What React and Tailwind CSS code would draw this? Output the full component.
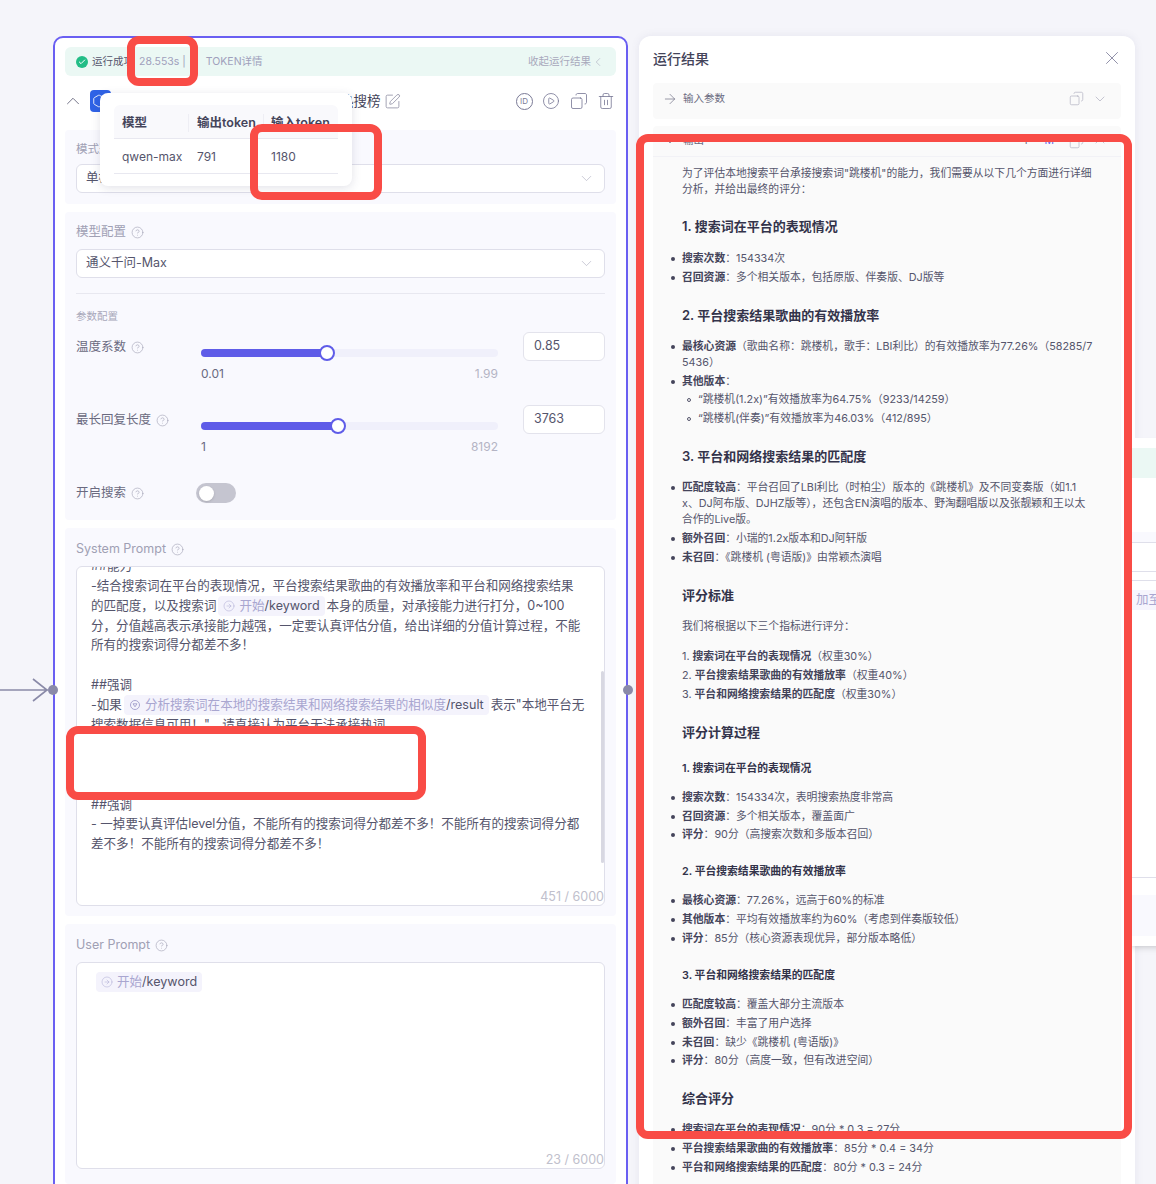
import { ArrowRight, Check, ChevronDown, ChevronLeft, ChevronUp, CircleArrowRight, CircleHelp, CirclePlay, Copy, Hexagon, SquarePen, Trash2, X } from 'lucide-react';

const FONT = { fontFamily: 'Inter, "Noto Sans CJK SC", sans-serif' };

function Help({ size = 13 }) {
    return <CircleHelp size={size} strokeWidth={1.2} className="text-[#a5a5b8] shrink-0" />;
}

function Select({ children }) {
    return (
        <div className="h-[29px] rounded-md border border-[#dfdfea] bg-white flex items-center justify-between pl-[9px] pr-[9px] text-[12.5px] text-[#55556c]">
            <span>{children}</span>
            <ChevronDown size={17} strokeWidth={1} className="text-[#b5b5c6]" />
        </div>
    );
}

function Slider({ label, min, max, value, percent }) {
    return (
        <div className="flex items-start">
            <div className="w-[125px] flex items-center gap-[5px] h-[28px] text-[12.5px] text-[#6a6a80]">
                {label} <Help />
            </div>
            <div className="w-[297px] pt-[16px]">
                <div className="relative h-[8px] rounded-full bg-[#f0f0fb]">
                    <div className="h-full rounded-full bg-[#5f5ce8]" style={{ width: `${percent}%` }} />
                    <div className="absolute top-[-4px] w-[16px] h-[16px] rounded-full bg-white border-2 border-[#5f5ce8] -ml-[8px]" style={{ left: `${percent}%` }} />
                </div>
                <div className="flex justify-between mt-[9px] text-[12px] leading-[16px]">
                    <span className="text-[#6a6a80]">{min}</span>
                    <span className="text-[#b4b4c4]">{max}</span>
                </div>
            </div>
            <div className="ml-auto -mt-[1px] w-[82px] h-[29px] rounded-md border border-[#e3e3ec] bg-white flex items-center pl-[10px] text-[12.5px] text-[#55556c]">
                {value}
            </div>
        </div>
    );
}

function Chip({ children, name, icon }) {
    return (
        <span className="inline-flex items-center h-[20px] px-[5px] mx-[2px] rounded bg-[#f4f3fc] align-top">
            {icon === 'down' ? (
                <svg width="12" height="12" viewBox="0 0 12 12" fill="none" stroke="#a9a6d0" className="mr-[4px]">
                    <circle cx="6" cy="6" r="4.5" />
                    <path d="M4 4.8h4L6 7.8z" />
                </svg>
            ) : (
                <CircleArrowRight size={12} strokeWidth={1} className="text-[#a9a6d0] mr-[4px]" />
            )}
            <span className="text-[#a9a6d0]">{children}</span>
            <span className="text-[#55556c]">{name}</span>
        </span>
    );
}

function H3({ children, first }) {
    return <h3 className={`text-[13px] leading-[20px] font-semibold text-[#33334a] ${first ? 'mt-[18px] mb-[15px]' : 'mt-[19px] mb-[14px]'}`}>{children}</h3>;
}

function H4({ children, first }) {
    return <h4 className={`text-[10.8px] leading-[16px] font-semibold text-[#33334a] mb-[13px] ${first ? 'mt-[19px]' : 'mt-[21px]'}`}>{children}</h4>;
}

function Ul({ items }) {
    return (
        <ul className="flex flex-col gap-[2.8px]">
            {items.map((item, i) => (
                <li key={i} className="relative">
                    <span className="absolute left-[-11px] top-[6px] w-[4px] h-[4px] rounded-full bg-[#44445a]" />
                    <b className="font-semibold text-[#44445a]">{item[0]}</b>{item[1]}
                    {item[2] && (
                        <div className="flex flex-col gap-[2.8px] mt-[2.8px] ml-[16px]">
                            {item[2].map(sub => (
                                <div key={sub} className="relative">
                                    <span className="absolute left-[-11px] top-[6px] w-[4px] h-[4px] rounded-full border border-[#55556c]" />
                                    {sub}
                                </div>
                            ))}
                        </div>
                    )}
                </li>
            ))}
        </ul>
    );
}

function RedBox({ className }) {
    return <div className={`absolute border-[8px] border-[#f94c46] rounded-[12px] ${className}`} />;
}

export default function App() {
    return (
        <div className="relative h-[1184px] overflow-hidden bg-[#f5f5fa]" style={FONT}>
            {/* neighbouring node behind the result panel */}
            <div className="absolute left-[1130px] top-[438px] w-[60px] h-[508px] bg-white shadow-md">
                <div className="h-[30px] mt-[10px] bg-[#ebf8f4]" />
                <div className="h-[11px] mt-[54px] bg-[#f9f9fe] border-b border-[#dfdfea]" />
                <div className="h-[10px] mt-[28px] border-y border-[#dfdfea]" />
                <div className="h-[20px] mt-[9px] pl-[6px] bg-[#f6f5fd] text-[12.5px] leading-[20px] text-[#a9a6d0]">加至</div>
                <div className="h-[18px] mt-[267px] border-t border-[#dfdfea]" />
                <div className="h-[41px] bg-[#f9f9fe]" />
            </div>

            {/* incoming edge */}
            <svg className="absolute left-0 top-[678px]" width="50" height="24" viewBox="0 0 50 24" fill="none" stroke="#8a8aa8" strokeWidth="1.6">
                <path d="M0 12h48M33 1l14 11-14 11" />
            </svg>

            <div className="flex items-start pl-[53px] pt-[36px] gap-[11px]">
                {/* node card */}
                <div className="relative w-[575px] h-[1300px] shrink-0 rounded-[10px] border-2 border-[#6a5ff2] bg-white px-[10px] pt-[9px]">
                    <div className="absolute left-[-7px] top-[647px] w-[10px] h-[10px] rounded-full bg-[#8a8aa8]" />
                    <div className="absolute right-[-7px] top-[647px] w-[10px] h-[10px] rounded-full bg-[#8a8aa8]" />

                    <div className="h-[29px] rounded-md bg-[#ebf8f4] flex items-center pl-[11px] pr-[11px] text-[10.5px]">
                        <span className="w-[12px] h-[12px] rounded-full bg-[#22bd86] flex items-center justify-center mr-[4px]">
                            <Check size={8} strokeWidth={3} className="text-white" />
                        </span>
                        <span className="text-[#55556c]">运行成功</span>
                        <span className="ml-[5px] text-[#a0a0bc]">28.553s |</span>
                        <span className="ml-[20px] text-[#a0a0bc]">TOKEN详情</span>
                        <span className="ml-auto flex items-center text-[#a8a8bc]">收起运行结果 <ChevronLeft size={14} strokeWidth={1} /></span>
                    </div>

                    <div className="flex items-center h-[54px] pb-[4px]">
                        <ChevronUp size={22} strokeWidth={1} className="text-[#6a6a80] -ml-[3px] mr-[6px]" />
                        <div className="w-[21px] h-[22px] rounded bg-[#2f62e6] flex items-center pl-[2px]">
                            <Hexagon size={14} strokeWidth={1.5} className="text-white" />
                        </div>
                        <span className="ml-auto mr-[3px] text-[13.5px] text-[#44445a]">分析搜索词在本地的搜索结果和网络热搜榜</span>
                        <SquarePen size={17} strokeWidth={1.1} className="text-[#8a8aa0]" />
                        <div className="ml-[115px] flex items-center gap-[9.5px] pr-[1px] text-[#7a7a96]">
                            <span className="w-[17px] h-[17px] rounded-full border border-[#7a7a96] flex items-center justify-center text-[8px] leading-none">ID</span>
                            <CirclePlay size={18} strokeWidth={1.1} />
                            <Copy size={18} strokeWidth={1.1} className="-scale-x-100" />
                            <Trash2 size={18} strokeWidth={1.1} />
                        </div>
                    </div>

                    <section className="h-[74px] rounded bg-[#f9f9fe] px-[11px] pt-[11px]">
                        <div className="text-[11.5px] leading-[16px] text-[#a0a0b4] mb-[7px]">模式选择</div>
                        <Select>单模型</Select>
                    </section>

                    <section className="h-[308px] mt-[8px] rounded bg-[#f9f9fe] px-[11px] pt-[11px]">
                        <div className="flex items-center gap-[5px] text-[12.5px] leading-[18px] text-[#a0a0b4] mb-[8px]">模型配置 <Help /></div>
                        <Select>通义千问-Max</Select>
                        <div className="border-t border-[#e8e8f0] mt-[15px] mb-[16px]" />
                        <div className="text-[10.5px] leading-[14px] text-[#a8a8ba] mb-[9px]">参数配置</div>
                        <Slider label="温度系数" min="0.01" max="1.99" value="0.85" percent={42.5} />
                        <div className="h-[24px]" />
                        <Slider label="最长回复长度" min="1" max="8192" value="3763" percent={46} />
                        <div className="flex items-center h-[20px] mt-[28px] text-[12.5px] text-[#6a6a80]">
                            <div className="w-[120px] flex items-center gap-[5px]">开启搜索 <Help /></div>
                            <div className="w-[40px] h-[20px] rounded-full bg-[#c5c5d0] p-[3px]">
                                <div className="w-[15px] h-[15px] rounded-full bg-white shadow" />
                            </div>
                        </div>
                    </section>

                    <section className="h-[388px] mt-[8px] rounded bg-[#f9f9fe] px-[11px] pt-[12px]">
                        <div className="flex items-center gap-[5px] text-[12.5px] leading-[18px] text-[#a0a0b4] mb-[8px]">System Prompt <Help /></div>
                        <div className="relative h-[340px] rounded-md border border-[#dfdfea] bg-white overflow-hidden pl-[14px] pr-[12px] text-[12.55px] leading-[19.75px] text-[#55556c]">
                            <div className="-mt-[11px]">
                                <div>##能力</div>
                                <div>-结合搜索词在平台的表现情况，平台搜索结果歌曲的有效播放率和平台和网络搜索结果</div>
                                <div>的匹配度，以及搜索词<Chip name="/keyword">开始</Chip>本身的质量，对承接能力进行打分，0~100</div>
                                <div>分，分值越高表示承接能力越强，一定要认真评估分值，给出详细的分值计算过程，不能</div>
                                <div>所有的搜索词得分都差不多！</div>
                                <div className="h-[20px]" />
                                <div>##强调</div>
                                <div>-如果<Chip name="/result" icon="down">分析搜索词在本地的搜索结果和网络搜索结果的相似度</Chip>表示"本地平台无</div>
                                <div>搜索数据信息可用！"，请直接认为平台无法承接热词</div>
                                <div className="h-[60px]" />
                                <div>##强调</div>
                                <div>- 一掉要认真评估level分值，不能所有的搜索词得分都差不多！不能所有的搜索词得分都</div>
                                <div>差不多！不能所有的搜索词得分都差不多！</div>
                            </div>
                            <div className="absolute right-0 top-[104px] w-[3px] h-[192px] rounded bg-[#d8d8e2]" />
                            <div className="absolute right-0 bottom-0 text-[12.5px] leading-[16px] text-[#c0c0cc]">451 / 6000</div>
                        </div>
                    </section>

                    <section className="h-[260px] mt-[8px] rounded bg-[#f9f9fe] px-[11px] pt-[12px]">
                        <div className="flex items-center gap-[5px] text-[12.5px] leading-[18px] text-[#a0a0b4] mb-[8px]">User Prompt <Help /></div>
                        <div className="relative h-[207px] rounded-md border border-[#dfdfea] bg-white px-[17px] pt-[9px] text-[12.55px] leading-[20px]">
                            <Chip name="/keyword">开始</Chip>
                            <div className="absolute right-0 bottom-0 text-[12.5px] leading-[16px] text-[#c0c0cc]">23 / 6000</div>
                        </div>
                    </section>
                </div>

                {/* result panel */}
                <div className="w-[496px] h-[1300px] shrink-0 rounded-[12px] bg-white shadow-[0_0_8px_rgba(90,90,140,0.1)] px-[14px]">
                    <div className="h-[47px] flex items-center justify-between pb-[3px]">
                        <span className="text-[14px] font-medium text-[#44445a]">运行结果</span>
                        <X size={22} strokeWidth={0.9} className="text-[#7a7a96] -mr-[2px]" />
                    </div>
                    <div className="h-[36px] rounded bg-[#fafafa] flex items-center pl-[9px] pr-[13px] pb-[5px] text-[10.5px] text-[#6a6a80]">
                        <ArrowRight size={16} strokeWidth={1} className="mr-[5px]" />
                        输入参数
                        <Copy size={15} strokeWidth={0.9} className="ml-auto mr-[8px] text-[#a0a0b4] -scale-x-100" />
                        <ChevronDown size={16} strokeWidth={0.9} className="text-[#a0a0b4]" />
                    </div>
                    <div className="mt-[7px] rounded bg-[#fafafa] h-[1200px]">
                        <div className="h-[31px] flex items-center pl-[9px] pr-[13px] text-[10.5px] text-[#6a6a80] border-b border-[#f2f2f6]">
                            <ChevronDown size={16} strokeWidth={1} className="mr-[5px]" />
                            输出
                            <span className="ml-auto mr-[15px] text-[#6a6a80]">T</span>
                            <span className="mr-[15px] text-[#5f5ce8]">M</span>
                            <Copy size={15} strokeWidth={0.9} className="mr-[8px] text-[#a0a0b4] -scale-x-100" />
                            <ChevronUp size={16} strokeWidth={0.9} className="text-[#a0a0b4]" />
                        </div>
                        <div className="pl-[29px] pr-[28px] pt-[9px] text-[10.8px] leading-[16px] text-[#55556c] break-all">
                            <p>为了评估本地搜索平台承接搜索词"跳楼机"的能力，我们需要从以下几个方面进行详细分析，并给出最终的评分：</p>
                            <H3 first>1. 搜索词在平台的表现情况</H3>
                            <Ul items={[['搜索次数', '：154334次'], ['召回资源', '：多个相关版本，包括原版、伴奏版、DJ版等']]} />
                            <H3>2. 平台搜索结果歌曲的有效播放率</H3>
                            <Ul items={[
                                ['最核心资源', '（歌曲名称：跳楼机，歌手：LBI利比）的有效播放率为77.26%（58285/75436）'],
                                ['其他版本', '：', ['“跳楼机(1.2x)”有效播放率为64.75%（9233/14259）', '“跳楼机(伴奏)”有效播放率为46.03%（412/895）']],
                            ]} />
                            <H3>3. 平台和网络搜索结果的匹配度</H3>
                            <Ul items={[
                                ['匹配度较高', <>：平台召回了LBI利比（时柏尘）版本的《跳楼机》及不同变奏版（如1.1<br />x、DJ阿布版、DJHZ版等），还包含EN演唱的版本、野淘翻唱版以及张靓颖和王以太合作的Live版。</>],
                                ['额外召回', '：小瑞的1.2x版本和DJ阿轩版'],
                                ['未召回', '：《跳楼机 (粤语版)》由常颖杰演唱'],
                            ]} />
                            <H3>评分标准</H3>
                            <p>我们将根据以下三个指标进行评分：</p>
                            <div className="mt-[14px] flex flex-col gap-[3px]">
                                <div>1. <b className="font-semibold text-[#44445a]">搜索词在平台的表现情况</b>（权重30%）</div>
                                <div>2. <b className="font-semibold text-[#44445a]">平台搜索结果歌曲的有效播放率</b>（权重40%）</div>
                                <div>3. <b className="font-semibold text-[#44445a]">平台和网络搜索结果的匹配度</b>（权重30%）</div>
                            </div>
                            <H3>评分计算过程</H3>
                            <H4 first>1. 搜索词在平台的表现情况</H4>
                            <Ul items={[['搜索次数', '：154334次，表明搜索热度非常高'], ['召回资源', '：多个相关版本，覆盖面广'], ['评分', '：90分（高搜索次数和多版本召回）']]} />
                            <H4>2. 平台搜索结果歌曲的有效播放率</H4>
                            <Ul items={[['最核心资源', '：77.26%，远高于60%的标准'], ['其他版本', '：平均有效播放率约为60%（考虑到伴奏版较低）'], ['评分', '：85分（核心资源表现优异，部分版本略低）']]} />
                            <H4>3. 平台和网络搜索结果的匹配度</H4>
                            <Ul items={[['匹配度较高', '：覆盖大部分主流版本'], ['额外召回', '：丰富了用户选择'], ['未召回', '：缺少《跳楼机 (粤语版)》'], ['评分', '：80分（高度一致，但有改进空间）']]} />
                            <H3>综合评分</H3>
                            <Ul items={[['搜索词在平台的表现情况', '：90分 * 0.3 = 27分'], ['平台搜索结果歌曲的有效播放率', '：85分 * 0.4 = 34分'], ['平台和网络搜索结果的匹配度', '：80分 * 0.3 = 24分']]} />
                        </div>
                    </div>
                </div>
            </div>

            {/* token popover */}
            <div className="absolute left-[100px] top-[93px] w-[252px] h-[93px] rounded-lg bg-white shadow-[0_2px_10px_rgba(60,60,100,0.15)] px-[14px] pt-[12px] text-[12px]">
                <div className="flex h-[34px] items-center rounded-t-md bg-[#f9f9fc] border-b border-[#e8e8f0] pt-[3px] font-semibold text-[12.5px] text-[#44445a]">
                    <span className="w-[75px] pl-[8px] border-r border-[#eeeef4]">模型</span>
                    <span className="w-[75px] pl-[8px] border-r border-[#eeeef4]">输出token</span>
                    <span className="pl-[7px]">输入token</span>
                </div>
                <div className="flex h-[35px] items-center border-b border-[#e8e8f0] pt-[1px] text-[#55556c]">
                    <span className="w-[75px] pl-[8px]">qwen-max</span>
                    <span className="w-[75px] pl-[8px]">791</span>
                    <span className="pl-[7px]">1180</span>
                </div>
            </div>

            {/* annotations */}
            <RedBox className="left-[127px] top-[36px] w-[71px] h-[50px]" />
            <RedBox className="left-[250px] top-[124px] w-[132px] h-[76px]" />
            <RedBox className="left-[66px] top-[726px] w-[360px] h-[74px] bg-white" />
            <RedBox className="left-[636px] top-[134px] w-[496px] h-[1005px]" />
        </div>
    );
}
